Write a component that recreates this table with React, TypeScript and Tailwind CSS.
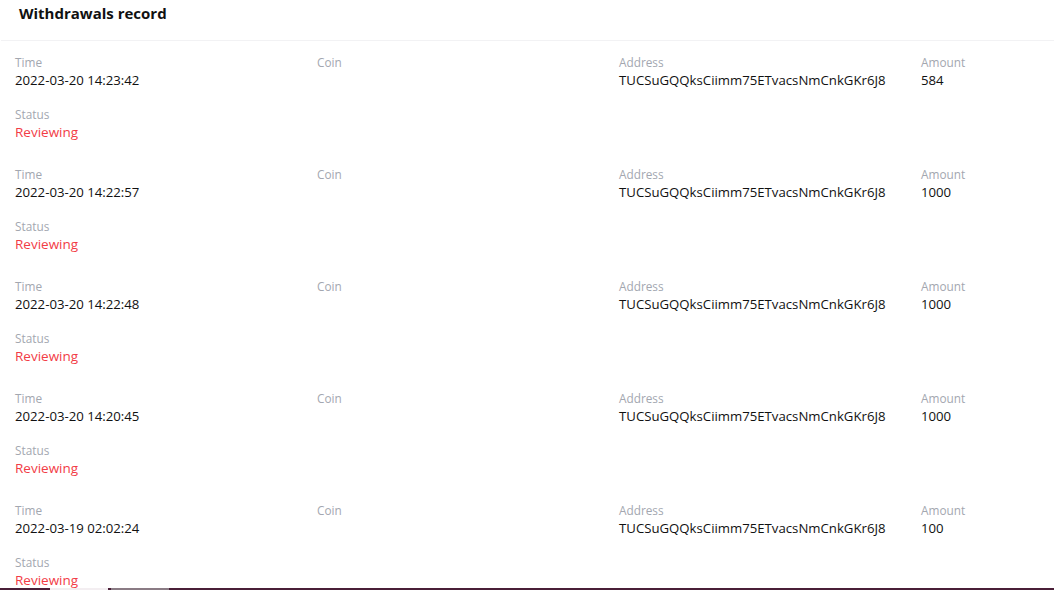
const records = [
  { time: "2022-03-20 14:23:42", amount: "584" },
  { time: "2022-03-20 14:22:57", amount: "1000" },
  { time: "2022-03-20 14:22:48", amount: "1000" },
  { time: "2022-03-20 14:20:45", amount: "1000" },
  { time: "2022-03-19 02:02:24", amount: "100" },
];

const ADDRESS = "TUCSuGQQksCiimm75ETvacsNmCnkGKr6J8";

function Field({ label, value, wide = true, red = false }: { label: string; value: string; wide?: boolean; red?: boolean }) {
  return (
    <div className={wide ? "w-[302px] shrink-0" : "flex-1"}>
      <div className="pt-px text-[11.8px] leading-[17px] text-[#a3a7b0]">{label}</div>
      <div className={red ? "text-[13.5px] leading-[18px] text-[#f23c46]" : "text-[13.2px] leading-[18px] text-[#111]"}>
        {value || "\u00a0"}
      </div>
    </div>
  );
}

export default function App() {
  return (
    <div className="min-h-screen bg-white" style={{ fontFamily: '"Open Sans", "Noto Sans", sans-serif' }}>
      <div className="h-[41px] border-b border-[#f2f2f4] ml-px px-[18px] flex items-start pt-[2px]">
        <h1 className="text-[15px] font-bold text-[#111] leading-[22px]">Withdrawals record</h1>
      </div>
      <div className="pt-3 px-[15px]">
        {records.map((r, i) => (
          <div key={i} className="flex flex-wrap gap-y-4 pb-6">
            <Field label="Time" value={r.time} />
            <Field label="Coin" value="" />
            <Field label="Address" value={ADDRESS} />
            <Field label="Amount" value={r.amount} wide={false} />
            <div className="basis-full">
              <Field label="Status" value="Reviewing" red />
            </div>
          </div>
        ))}
      </div>
      <div className="fixed bottom-0 left-0 right-0 h-[2px] bg-[#4a1f38] flex">
        <div className="ml-[50px] w-[58px] bg-[#f3eef1]" />
        <div className="ml-[3px] w-[58px] bg-[#8a7b84]" />
      </div>
    </div>
  );
}
